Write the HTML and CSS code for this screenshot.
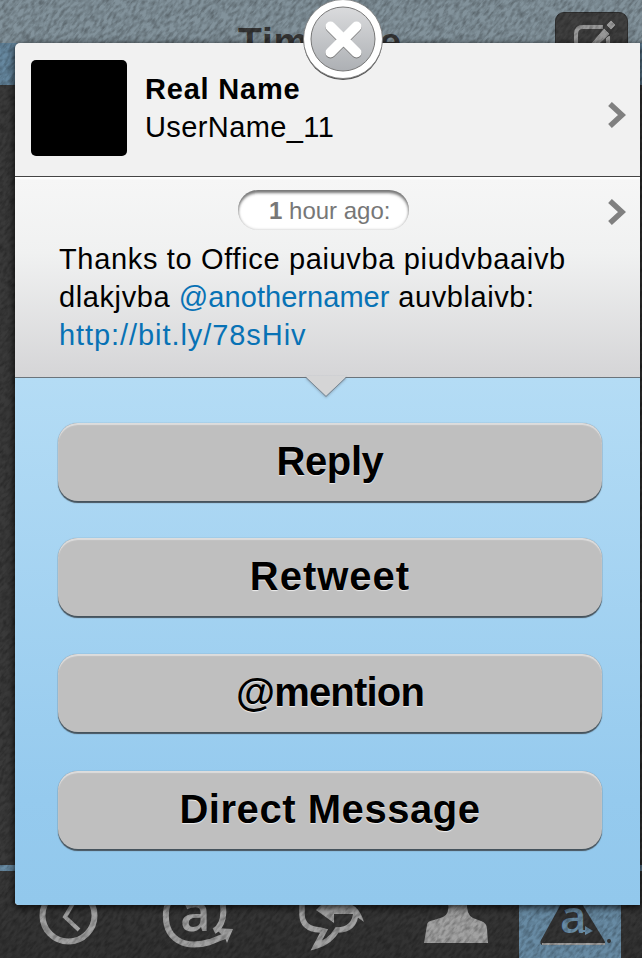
FILE: index.html
```html
<!DOCTYPE html>
<html lang="en">
<head>
<meta charset="utf-8">
<title>Timeline</title>
<link rel="stylesheet" href="styles.css">
</head>
<body>
<div class="phone">
  <header class="topbar">
    <h1>Timeline</h1>
    <div class="compose">
      <svg width="72" height="72" viewBox="0 0 72 72"><path d="M47 14H27q-7 0-7 7v25q0 7 7 7h20q5 0 5-7V23" fill="none" stroke="#999" stroke-width="4"/><path d="M31 35 48 15l6 6-19 18-9 3zM50 12l5-5 5 5-5 5z" fill="#999" stroke="#444" stroke-width="1"/></svg>
    </div>
  </header>
  <main class="feed"></main>
  <nav class="tabs">
    <div class="tab"><svg viewBox="0 0 128 87"><circle cx="68.500" cy="44.500" r="26" fill="none" stroke="#a2a2a2" stroke-width="6"/><path d="M75 29 65 46l14 13" fill="none" stroke="#a2a2a2" stroke-width="4"/></svg></div>
    <div class="tab"><svg viewBox="0 0 128 87"><path d="M86 60c12-6 13-31 0-42-16-10-46 0-48 23-2 26 17 38 44 30l15-6" fill="none" stroke="#a2a2a2" stroke-width="6"/><path d="m87 57 18 1-6 14-2-5z" fill="#a2a2a2"/><text class="at-letter" x="52" y="60">a</text></svg></div>
    <div class="tab"><svg viewBox="0 0 128 87"><path d="M46 28v15q0 15 18 16l4 1-8 15q14-4 21-16 18 0 19-18" fill="none" stroke="#a2a2a2" stroke-width="5.500"/><path d="m60 39 17-17v9q24-4 31 20l-11-8H78v9z" fill="#a2a2a2"/></svg></div>
    <div class="tab"><svg viewBox="0 0 128 87"><path d="M64 30h19q-1 14 6 17l8 3q6 2 6 8l1 14H40l3-18q0-4 7-5l9-3q7-3 5-16" fill="#a2a2a2"/></svg></div>
    <div class="tab selected"><svg viewBox="0 0 102 87"><path d="m52 15 33 54q3 5-2 5H24q-4 0-2-5z" fill="#343434"/><path d="M23 73h63" stroke="#a2a2a2" stroke-width="2"/><circle cx="90" cy="70" r="2" fill="#333"/><text class="brand-letter" x="41" y="62">a</text><path d="M61 59h5v-4l8 5-8 4v-3h-5z" fill="#688ba4"/></svg></div>
  </nav>
  <div class="grain">
    <svg width="1250" height="1250"><filter id="grain" x="0" y="0" width="100%" height="100%"><feTurbulence type="fractalNoise" baseFrequency=".14 .34" numOctaves="3" seed="8"/><feColorMatrix values="0 0 0 0 0  0 0 0 0 0  0 0 0 0 0  1.9 0 0 0 -.7"/></filter><rect width="1250" height="1250" filter="url(#grain)"/></svg>
  </div>
  <section class="sheet">
    <div class="profile">
      <div class="avatar"></div>
      <div class="names"><strong>Real Name</strong><span>UserName_11</span></div>
      <svg class="chevron" width="18" height="26" viewBox="0 0 18 26"><path d="m2 2 12 11L2 24" fill="none" stroke="#808080" stroke-width="5.5"/></svg>
    </div>
    <div class="tweet">
      <div class="time"><b>1</b> hour ago:</div>
      <svg class="chevron" width="18" height="26" viewBox="0 0 18 26"><path d="m2 2 12 11L2 24" fill="none" stroke="#808080" stroke-width="5.5"/></svg>
      <div class="message">
        <div class="line one">Thanks to Office paiuvba piudvbaaivb</div>
        <div class="line two">dlakjvba <span class="link">@anothernamer</span> auvblaivb:</div>
        <div class="line three"><span class="link">http://bit.ly/78sHiv</span></div>
      </div>
      <svg class="pointer" width="44" height="24" viewBox="0 0 44 24"><path d="M2 0h40v1L22 20 2 1z" fill="#d5d5d6"/><path d="M2 1.500 22 20.500 42 1.500" fill="none" stroke="#7b8790"/></svg>
    </div>
    <div class="actions">
      <div class="button reply">Reply</div>
      <div class="button retweet">Retweet</div>
      <div class="button mention">@mention</div>
      <div class="button direct">Direct Message</div>
    </div>
    <svg class="close" width="84" height="84" viewBox="0 0 84 84">
      <defs><linearGradient id="disc" x2="0" y2="1"><stop stop-color="#dadbdd"/><stop offset="1" stop-color="#adb0b4"/></linearGradient></defs>
      <circle cx="42" cy="41.500" r="39.500" fill="#555"/><circle cx="42" cy="40" r="39.500" fill="#fff" stroke="#777" stroke-width=".8"/>
      <circle cx="42" cy="40" r="32" fill="url(#disc)" stroke="#777"/>
      <path d="m29.500 28.500 26 26m0-26-26 26" stroke="#777" stroke-width="10" stroke-linecap="round"/>
      <path d="m29.500 27.500 26 26m0-26-26 26" stroke="#fff" stroke-width="10" stroke-linecap="round"/>
    </svg>
  </section>
</div>
</body>
</html>
```
FILE: styles.css
```css
* { box-sizing: border-box; }
body { margin: 0; font-family: "Liberation Sans", sans-serif; }
svg { display: block; }
.phone { position: relative; width: 642px; height: 958px; overflow: hidden; background: #3a3a3a; display: flex; flex-direction: column; }
.topbar { height: 85px; flex: none; background: linear-gradient(#82929b 43px, #6688a0 43px); display: grid; grid-template-columns: 1fr 87px; padding-top: 12px; }
.topbar h1 { margin: 0; padding: 9px 0 0 85px; text-align: center; font-size: 39px; line-height: 42px; color: #383838; letter-spacing: .8px; }
.compose { width: 73px; height: 72px; border-radius: 9px; background: #404040; border: 1px solid #303030; }
.feed { flex: 1; border-bottom: 6px solid #688ba4; }
.tabs { height: 87px; flex: none; display: grid; grid-template-columns: 128px 128px 128px 135px 102px 21px; background: linear-gradient(#3a3a3a, #313131); }
.tab svg { width: 100%; height: 87px; }
.tab:nth-child(4) svg { width: 128px; }
.selected { background: #688ba4; }
.at-letter { font: 600 53px "Open Sans", sans-serif; fill: #a2a2a2; }
.brand-letter { font: 600 46px "Open Sans", sans-serif; fill: #688ba4; }
.grain { position: absolute; inset: 0; overflow: hidden; opacity: .33; }
.grain svg { position: absolute; left: -304px; top: -146px; transform: rotate(-50deg); }
.sheet { position: absolute; left: 15px; top: 43px; width: 625px; height: 862px; border-radius: 5px 0 0 4px; background: #f1f1f1; box-shadow: 0 2px 7px 1px #000b; display: flex; flex-direction: column; clip-path: inset(-60px -2px -12px -10px); }
.profile { height: 134px; flex: none; display: flex; padding: 17px 14px 0 16px; border-bottom: 1px solid #444; border-radius: 5px 0 0; }
.avatar { width: 96px; height: 96px; border-radius: 5px; background: #000; }
.names { flex: 1; padding: 10px 0 0 18px; font-size: 29px; line-height: 38px; }
.names strong, .names span { display: block; width: max-content; }
.names strong { letter-spacing: .8px; }
.names span { letter-spacing: .4px; }
.chevron { flex: none; margin-top: 42px; }
.tweet { position: relative; height: 201px; flex: none; display: grid; grid-template-columns: 223px 171px 1fr 18px; grid-template-rows: 63px 1fr; padding-right: 14px; background: linear-gradient(#fff 1px, #f6f6f6 3px, #f0f1f1 38%, #d5d5d7); border-bottom: 1px solid #6b747b; }
.tweet .chevron { grid-column: 4; margin-top: 22px; }
.time { grid-column: 2; height: 40px; margin-top: 13px; padding-left: 31px; border-radius: 20px; background: #fff; box-shadow: inset 0 3px 3px #777, inset 0 0 3px #bbb; color: #777; font-size: 24px; line-height: 42px; white-space: nowrap; }
.message { grid-column: 1 / -1; padding-left: 44px; font-size: 29px; line-height: 38px; white-space: nowrap; }
.one { letter-spacing: .66px; }
.two { letter-spacing: .6px; }
.two .link { letter-spacing: .05px; }
.three { letter-spacing: .93px; }
.link { color: #0872b5; }
.pointer { position: absolute; left: 289px; top: 199px; filter: drop-shadow(0 1px 1px #6788); }
.actions { flex: 1; display: flex; flex-direction: column; gap: 38px; padding: 45px 38px 0 43px; background: linear-gradient(#b4dcf5, #95caee 80%, #92c8ec); border-radius: 0 0 0 4px; }
.button { flex: none; height: 78px; border-radius: 20px; background: #bfbfbf; box-shadow: 0 1.5px 1px #46535c, 0 0 1px #6b7a85, inset 0 2px 1px #ddd; text-align: center; font-size: 40px; font-weight: bold; line-height: 77px; text-shadow: 0 1px 1px #eee; }
.reply { letter-spacing: -.4px; }
.retweet { margin-top: -1px; letter-spacing: 1px; }
.mention { letter-spacing: -.8px; }
.direct { margin-top: 1px; letter-spacing: .55px; }
.close { position: absolute; left: 286px; top: -44px; }
```
